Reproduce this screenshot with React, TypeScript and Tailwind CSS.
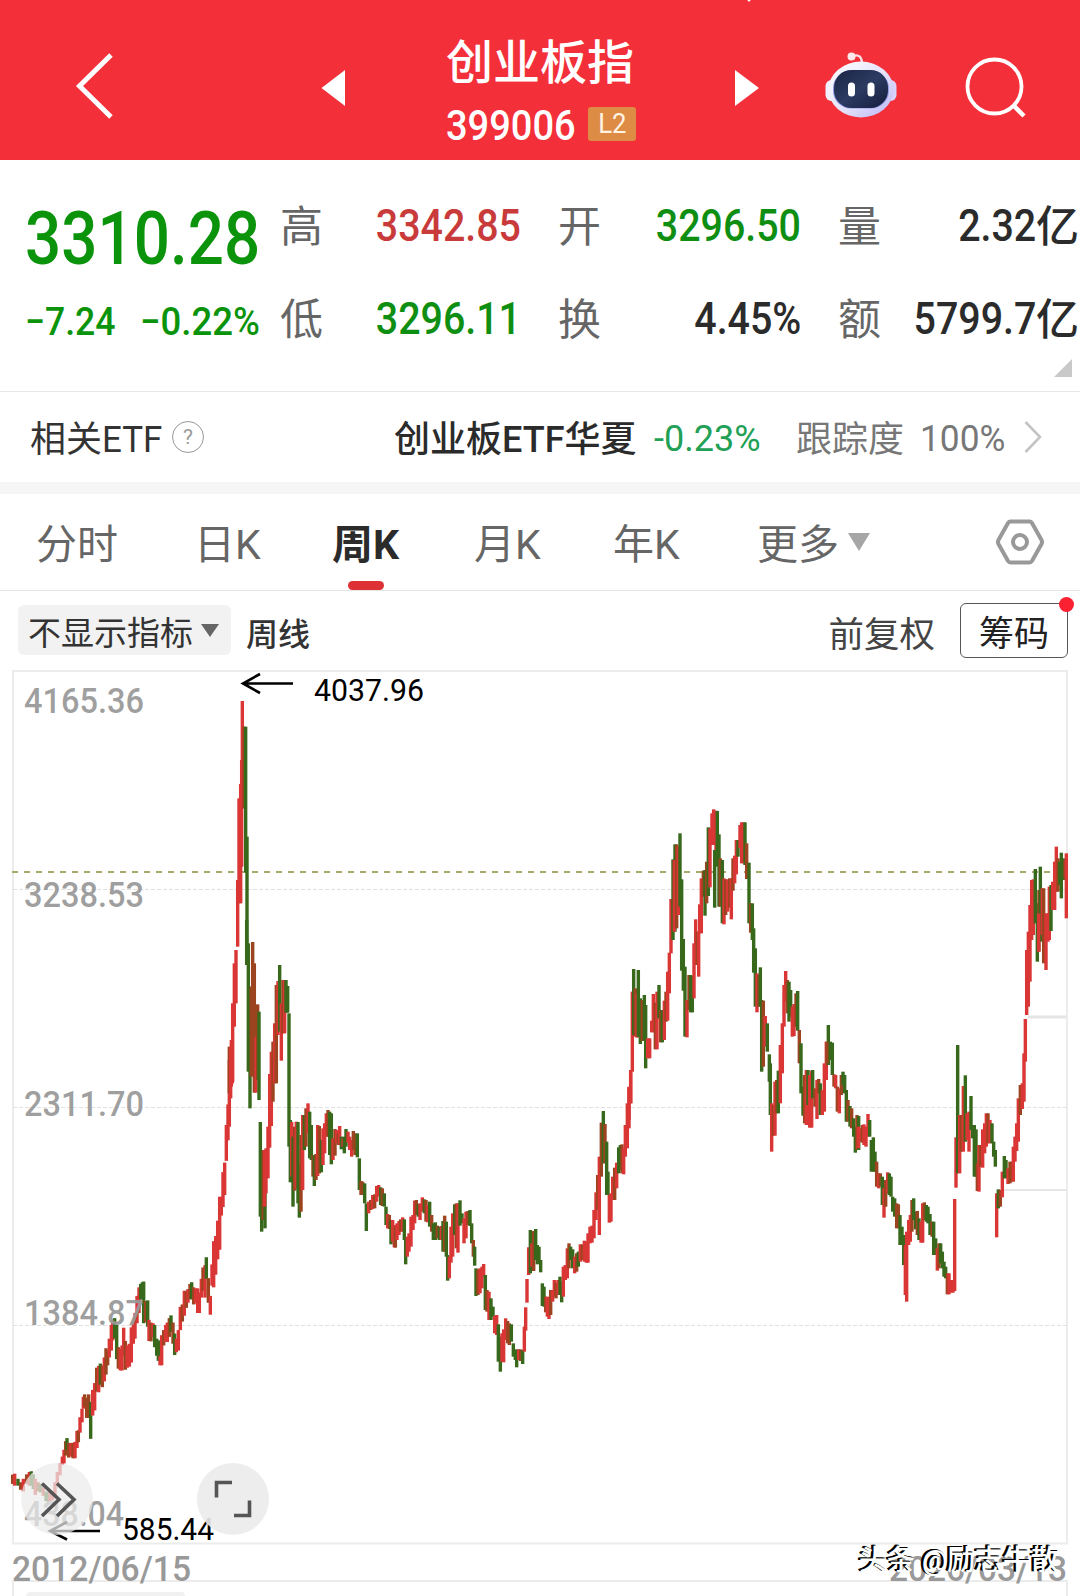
import { clsx } from 'clsx'

const CJK = "font-[Roboto,'Noto_Sans_CJK_SC',sans-serif]"

// Candles are "x high low colour", in thirds of a pixel from the run's origin.
// r = up week, g = down week, m = both overlapping
const RUNS = [
  {
    x: 0, y: 1060, sy: 1 / 2.925,
    bars: `38 1213 1240 m,44 1210 1245 r,54 1225 1245 g,62 1235 1257 m,70 1225 1262 r,80 1212 1240 m,88 1205 1245 r,94 1203 1245 g,100 1212 1255 g,106 1225 1272 r,114 1235 1262 m,122 1240 1265 g,130 1250 1275 r,138 1262 1290 g,145 1265 1292 g,150 1262 1290 r,158 1260 1288 r,165 1235 1275 r,172 1205 1245 r,180 1180 1215 r,187 1160 1185 r,192 1140 1180 r,197 1115 1157 m,201 1106 1140 g,206 1120 1163 m,213 1120 1160 r,219 1120 1165 m,225 1117 1165 r,231 1085 1135 r,235 1083 1118 m,240 1045 1090 r,246 1020 1060 r,250 985 1020 r,254 978 1015 m,260 988 1047 m,266 978 1047 m,272 1000 1108 g,278 965 1040 r,284 945 1025 r,290 900 970 m,296 895 972 r,301 888 950 g,307 893 957 m,313 870 940 r,318 843 920 m,323 850 893 m,328 815 870 r,334 775 850 r,338 760 820 r,344 755 815 g,350 775 875 g,355 840 903 m,361 845 908 r,366 835 908 r,371 783 865 r,376 822 906 m,382 835 900 r,388 830 897 r,394 782 885 r,400 765 830 r,405 740 815 r,411 690 770 r,417 665 740 r,422 655 700 g,427 650 700 g,431 648 770 g,437 705 767 m,443 703 780 g,447 760 822 r,453 768 823 m,459 770 810 r,464 775 840 g,470 815 865 g,475 820 880 g,480 865 893 r,485 805 893 r,491 790 835 m,497 775 825 r,502 768 825 r,508 755 810 m,513 747 795 g,519 768 830 m,524 800 863 g,529 815 855 r,535 790 850 r,541 722 790 r,547 715 765 m,553 675 748 r,559 675 725 m,564 670 710 r,570 655 700 m,575 650 700 g,581 665 715 m,587 668 712 r,593 668 740 r,598 680 740 r,604 640 695 r,609 607 675 m,615 600 695 r,619 577 640 g,625 638 710 m,631 690 745 r,636 598 660 r,641 530 665 r,647 515 628 r,653 470 583 r,659 400 555 r,664 400 455 r,669 328 430 r,674 300 395 r,679 190 295 r,684 130 235 r,688 0 195 r`,
  },
  {
    x: 0, y: 660, sy: 1 / 3,
    bars: `688 1160 1300 m,694 1140 1280 r,698 1030 1265 r,703 910 1100 r,708 870 1030 r,713 660 860 r,717 415 730 r,722 372 730 r,725 300 620 r,727 123 445 r,732 200 445 m,737 200 637 g,741 530 915 g`,
  },
  {
    x: 220, y: 920, sy: 1 / 3,
    bars: `32 380 535 r,37 360 490 r,80 0 135 g,85 70 455 g,90 200 565 g,94 200 470 m,98 66 440 m,103 130 518 m,108 350 518 r,113 253 480 m,117 275 540 g,121 606 890 g,125 710 935 g,130 690 900 m,135 690 925 g,134 690 860 r,138 685 820 r,144 620 775 r,149 462 683 r,154 395 618 r,159 365 545 m,164 310 490 r,169 195 490 m,174 183 345 r,179 135 335 g,184 250 422 r,189 180 340 m,194 180 340 r,198 180 278 g,203 198 278 g,207 280 680 g,211 600 787 g,215 606 770 r,219 650 860 g,224 620 812 m,229 605 805 r,234 606 850 g,238 735 893 g,243 645 875 m,248 585 810 r,253 585 690 g,258 565 680 m,264 550 640 r,269 575 715 g,274 615 720 g,279 705 770 m,283 705 798 g,288 702 780 m,293 615 768 r,298 618 760 m,304 660 757 g,309 625 735 r,314 610 700 r,319 580 650 r,324 570 650 m,329 575 705 g,334 580 733 g,339 655 720 r,345 627 707 m,350 630 670 r,355 640 675 m,359 618 675 r,364 650 688 g,369 655 680 r,373 650 700 g,378 627 680 g,384 635 668 r,389 650 690 r,395 660 710 r,400 633 690 m,405 640 705 m,412 640 712 g,418 715 810 g,423 783 825 m,428 785 825 m,434 790 850 g,439 850 933 g`,
  },
  {
    x: 340, y: 1060, sy: 1 / 3,
    bars: `86 425 460 r,92 420 450 m,98 405 447 r,104 403 445 m,110 378 425 r,116 375 410 r,122 382 435 g,127 385 438 m,133 400 440 g,138 440 495 g,143 462 505 r,148 465 507 m,153 482 553 g,158 480 545 r,163 495 562 r,166 500 563 m,171 490 540 r,177 483 525 r,182 478 515 m,188 472 515 r,193 478 540 g,197 540 613 g,202 530 590 r,207 520 575 r,213 470 560 r,219 465 510 r,224 422 490 r,229 420 465 m,235 432 470 g,240 430 480 r,247 412 455 r,253 418 460 g,258 420 485 m,263 435 487 r,269 425 500 g,275 465 515 m,280 490 540 g,286 487 540 g,292 497 535 m,298 500 540 g,304 498 540 r,309 483 575 g,314 467 575 m,319 485 590 g,323 585 662 g,328 590 655 r,333 500 608 r,338 460 590 r,344 433 525 g,349 430 565 m,354 430 578 r,360 421 497 g,366 460 490 g,372 475 550 r,378 455 535 r,384 453 495 m,390 450 498 g,395 490 550 g,400 540 590 m,404 560 617 g,408 625 708 g,414 628 705 m,420 625 700 r,426 620 685 r,431 612 650 r,436 645 750 g,441 690 755 m,447 695 780 r,453 715 780 g,459 740 770 g,464 768 820 r,470 765 825 r,475 793 905 g,481 830 935 g,486 820 905 r,491 808 907 r,497 775 840 r,503 783 850 m,508 790 855 m,514 793 845 g,520 850 890 g,526 870 900 g,530 868 922 g,536 868 900 r,542 868 903 m,548 870 912 g,553 800 875 r,557 742 812 r,561 657 728 r,566 562 645 r,571 510 640 g,576 550 620 r,581 513 633 m,587 507 600 g,592 555 613 g,597 560 600 g,602 600 637 g,607 670 738 g,612 680 740 g,617 710 757 m,622 710 770 r,627 715 777 r,632 690 765 m,638 690 725 r,643 660 710 r,648 668 715 m,654 660 705 r,660 650 705 g,665 665 727 g,670 620 710 r,676 615 660 r,682 565 655 r,687 550 625 m,692 560 600 g,698 568 625 g,704 590 640 r,710 580 635 m,715 575 620 g,721 553 605 r,727 553 600 m,733 542 605 r,739 545 608 r,744 520 608 r,750 500 550 r,756 497 548 r,762 450 535 r,768 397 480 r,773 345 450 m,778 290 525 r,784 188 350 m,790 153 310 g,795 192 310 m,800 245 405 g,804 335 405 g,808 405 488 r,813 400 485 r,818 350 420 r,824 323 420 m,830 308 385 r,836 262 340 g,841 255 330 g,846 253 340 m,851 265 343 r,856 195 290 r,862 130 265 r,867 85 205 r,872 30 130 r`,
  },
  {
    x: 580, y: 780, sy: 1 / 3,
    bars: `147 920 1020 r,152 870 970 r,157 635 875 r,161 567 765 g,166 625 770 m,171 640 773 r,175 570 770 g,181 655 792 g,187 660 783 m,193 645 783 g,197 675 865 g,203 775 835 r,209 775 835 r,215 722 757 r,220 642 757 r,226 668 808 m,231 635 808 r,237 615 715 g,242 690 787 m,247 690 787 g,253 662 780 r,258 635 725 m,263 575 722 r,268 518 640 r,273 357 520 r,279 238 480 g,285 193 455 g,283 240 455 r,290 193 445 m,295 200 405 r,300 160 380 g,305 298 572 g,310 477 632 g,315 560 770 g,321 660 772 r,327 585 690 m,332 585 697 g,337 588 697 g,342 490 655 r,347 418 555 r,352 455 555 m,356 455 590 r,359 373 460 r,364 295 460 r,370 272 350 m,375 270 407 g,380 245 370 m,385 142 348 g,390 145 322 r,396 100 195 r,401 88 195 r,404 210 383 g,408 92 210 r,412 93 260 g,417 163 380 g,421 235 380 m,427 240 430 g,432 295 433 r,437 298 405 m,443 298 395 r,449 295 383 m,454 295 418 r,459 235 332 m,464 227 310 r,469 180 283 r,474 180 230 g,480 135 205 r,485 127 250 r,490 127 250 r,495 127 255 g,500 190 297 m,507 248 430 g,512 370 458 m,517 370 480 g,521 445 578 g,526 505 680 g,531 580 697 r,536 585 680 m,541 562 680 g,545 660 875 g,550 662 860 m,556 708 800 r,562 730 815 g,568 823 905 g,571 850 1005 g,575 970 1115 r,580 975 1067 m,585 905 1067 r,590 900 1000 m,595 872 1000 g,601 795 970 r,607 730 880 r,612 615 740 r,617 573 665 r,622 600 700 m,627 605 725 g,632 630 710 g,637 680 770 r,642 672 768 r,648 640 740 m,653 633 752 g,658 750 850 m,663 790 940 g,669 920 1007 g,674 885 1030 m,679 870 1035 r,684 870 975 g,689 885 1043 r,695 872 1043 r,698 870 955 g,705 925 980 m,711 900 1017 r,716 897 940 m,721 910 1005 g,727 930 1005 r,733 850 995 r,739 785 900 r,745 735 855 g,741 785 850 m`,
  },
  {
    x: 760, y: 960, sy: 1 / 3,
    bars: `211 245 300 g,217 248 345 g,222 343 380 m,227 345 385 r,232 380 455 m,238 385 460 r,244 345 405 m,249 335 375 g,254 345 400 g,259 390 485 g,264 420 485 m,270 438 500 g,275 445 505 m,281 475 530 g,286 500 578 g,291 465 570 m,296 468 570 g,295 500 565 r,301 505 545 r,307 495 548 m,312 493 555 r,318 500 560 r,324 462 530 r,329 480 530 g,334 540 635 g,340 532 635 g,345 575 635 g,350 605 680 m,356 640 685 r,361 640 680 m,367 650 735 g,372 685 773 r,377 660 740 m,383 637 700 r,388 640 705 g,393 650 710 g,398 710 755 g,404 715 770 g,410 730 805 m,415 733 805 m,420 765 855 g,426 800 855 g,431 825 915 g,436 855 1005 r,440 815 1025 r,446 780 855 r,451 765 845 r,456 720 815 m,461 715 780 g,467 755 808 g,472 753 825 m,477 775 840 g,483 785 848 r,488 730 848 r,493 727 780 m,499 735 785 g,504 740 790 g,510 762 825 g,516 785 830 m,521 785 885 g,527 835 885 g,532 865 932 r,537 850 925 m,542 850 910 g,547 875 925 g,552 905 950 g,557 920 955 g,562 940 1003 m,567 940 1003 r,573 960 998 r,579 960 998 r,584 717 993 r,588 532 683 r,593 255 640 g,599 465 640 r,604 465 575 m,610 378 575 r,616 346 545 g,621 460 540 r,627 455 575 r,633 408 510 g,638 495 535 g,643 495 650 g,648 508 650 g,652 610 693 m,657 555 695 r,662 555 620 m,668 508 623 r,674 490 580 r,679 460 560 r,684 460 550 m,690 480 550 r,696 490 550 g,701 545 590 g,706 570 620 g,710 700 832 r,715 688 745 g,721 690 740 m,727 635 712 r,733 588 655 g,738 600 655 g,744 625 672 r,750 605 670 m,755 605 665 m,760 560 665 r,765 530 605 r,770 490 573 r,775 415 545 r,781 375 465 m,787 370 447 r,792 280 425 r,796 177 305 r`,
  },
  {
    x: 960, y: 830, sy: 1 / 3,
    bars: `200 360 555 r,205 305 530 r,210 225 455 r,215 150 330 r,220 148 315 r,226 117 280 g,232 220 395 g,237 180 365 m,241 110 335 g,236 250 365 r,247 175 315 r,251 175 400 m,258 250 420 r,264 250 335 r,268 170 330 r,273 165 303 g,278 155 240 r,284 95 240 r,289 50 185 r,294 85 185 m,299 95 165 g,304 68 205 g,310 85 150 g,315 90 145 m,319 70 265 r`,
  },
]

const FILL: Record<string, string> = { r: '#d93635', g: '#37681b', m: '#9c4420' }

function Candles() {
  return (
    <g>
      {RUNS.map((run) =>
        run.bars.split(',').map((bar, i) => {
          const [x, high, low, kind] = bar.split(' ')
          return (
            <rect
              key={`${run.x}-${run.y}-${i}`}
              x={run.x + Number(x) / 3 - 1.7}
              y={run.y + Number(high) * run.sy}
              width="3.4"
              height={(Number(low) - Number(high)) * run.sy}
              fill={FILL[kind]}
            />
          )
        }),
      )}
    </g>
  )
}

const AXIS = [
  { label: '4165.36', y: 713 },
  { label: '3238.53', y: 907 },
  { label: '2311.70', y: 1116 },
  { label: '1384.87', y: 1324.5 },
  { label: '438.04', y: 1525.5 },
]

function Chart() {
  return (
    <svg viewBox="0 660 1080 936" className="block h-[936px] w-full shrink-0">
      {/* frame and grid */}
      <g stroke="#ececec" strokeWidth="2" fill="none">
        <path d="M13 1543.5V671H1067V1543.5ZM13 1596V1581H1067V1596" />
        <path d="M1028 1017H1067" stroke="#e6e6e6" strokeWidth="3" />
        <path d="M1004 1190H1067" stroke="#e6e6e6" />
      </g>
      <path
        d="M13 889.5H1067M13 1107.5H1067M13 1325.5H1067"
        stroke="#e0e0e0"
        strokeWidth="1.2"
        strokeDasharray="4 2"
      />
      <path d="M12 872H1067" stroke="#a9a96c" strokeWidth="1.8" strokeDasharray="6 6" />
      <rect x="26" y="1592" width="159" height="10" rx="4" fill="#f1f1f1" />

      <Candles />

      <g fontFamily="Roboto, sans-serif" fontSize="35" fontWeight="500" fill="#999">
        {AXIS.map((a) => (
          <text
            key={a.label}
            x={24}
            y={a.y}
            textLength={a.label.length > 6 ? 120 : 100}
            lengthAdjust="spacingAndGlyphs"
            fillOpacity="0.94"
          >
            {a.label}
          </text>
        ))}
        <text x="12" y="1581" textLength="179" lengthAdjust="spacingAndGlyphs">2012/06/15</text>
        <text x="889" y="1581" textLength="178" lengthAdjust="spacingAndGlyphs">2026/03/13</text>
      </g>

      {/* high / low markers */}
      <g stroke="#000" strokeWidth="2.6" fill="none">
        <path d="M293 683.5H243M260 674L243 683.5L260 693" />
        <path d="M100 1531H50M67 1522L50 1531L67 1539.5" />
      </g>
      <g fontFamily="Roboto, sans-serif" fontSize="30.5" fill="#000">
        <text x="314" y="701" textLength="110" lengthAdjust="spacingAndGlyphs">4037.96</text>
        <text x="122" y="1540" textLength="92" lengthAdjust="spacingAndGlyphs">585.44</text>
      </g>

      {/* floating buttons */}
      <circle cx="57" cy="1499" r="36" fill="#ebebeb" fillOpacity="0.72" />
      <circle cx="233" cy="1499" r="36" fill="#ebebeb" fillOpacity="0.9" />
      <g stroke="#555" strokeWidth="3.6" fill="none">
        <path d="M42 1483.5L59 1499.5L42 1516M57 1483.5L74 1499.5L57 1516" />
        <path d="M216.500 1497.500V1482.500H232M234 1515.500H249.500V1500.500" />
      </g>
    </svg>
  )
}

function Robot() {
  return (
    <svg viewBox="0 0 72 68" className="h-[68px] w-[72px]">
      <defs>
        <linearGradient id="shell" x1="0" y1="0" x2="1" y2="1">
          <stop offset="0" stopColor="#fff" />
          <stop offset="0.55" stopColor="#e4e2fb" />
          <stop offset="1" stopColor="#b9b4f4" />
        </linearGradient>
        <linearGradient id="visor" x1="0" y1="0" x2="1" y2="1">
          <stop offset="0" stopColor="#1b2444" />
          <stop offset="0.5" stopColor="#2c3b62" />
          <stop offset="1" stopColor="#141c3c" />
        </linearGradient>
      </defs>
      <path d="M28 5C34 3 37 6 37 13" stroke="#fbdfe4" strokeWidth="2.400" fill="none" />
      <circle cx="26.500" cy="5.500" r="4" fill="#fde9ec" />
      <rect x="0.500" y="29" width="12" height="21" rx="6" fill="#f3f0fd" />
      <rect x="59.500" y="29" width="12" height="21" rx="6" fill="#d9d3fa" />
      <ellipse cx="36" cy="38.500" rx="32.500" ry="28" fill="url(#shell)" />
      <rect x="8" y="19.500" width="56" height="38" rx="18" fill="#8f9be6" />
      <rect x="9" y="19" width="54" height="38" rx="17.500" fill="url(#visor)" />
      <rect x="23" y="31.500" width="7" height="14" rx="3.500" fill="#fff" />
      <rect x="42.500" y="31.500" width="7" height="14" rx="3.500" fill="#fff" />
    </svg>
  )
}

function Header() {
  return (
    <header className="relative flex h-40 shrink-0 items-start bg-[#f32f3a] text-white">
      <svg viewBox="0 0 1080 160" className="pointer-events-none absolute inset-0 h-full w-full">
        <path d="M111 55L79.500 86L111 117" stroke="#fff" strokeWidth="5" fill="none" />
        <path d="M321.500 88L345 70V106ZM759 88L735 70V106Z" fill="#fff" />
        <circle cx="994.500" cy="86.500" r="27" stroke="#fff" strokeWidth="3.800" fill="none" />
        <path d="M1013 105L1024 116" stroke="#fff" strokeWidth="4.500" />
        <circle cx="749" cy="0" r="1.500" fill="#fff" />
      </svg>
      <div className="ml-[446px] w-[190px] pt-[38px]">
        <h1 className="text-[47px] leading-[50px] font-medium whitespace-nowrap">创业板指</h1>
        <div className="mt-[19px] flex h-[34px] items-center">
          <span className="w-[142px] origin-left scale-x-[0.905] pt-[3px] text-[42px] leading-none font-medium">399006</span>
          <span className="flex h-[34px] w-12 items-center justify-center rounded-[3px] bg-[#dd8b45] text-[28px] leading-none text-[#fff3e2]">
            <span className="scale-x-[0.92]">L2</span>
          </span>
        </div>
      </div>
      <div className="ml-[189px] pt-[51px]">
        <Robot />
      </div>
    </header>
  )
}

type StatProps = { label: string; value: string; unit?: string; tone?: string }

function Stat({ label, value, unit, tone = 'text-[#2b2b2b]' }: StatProps) {
  return (
    <div className="flex items-center justify-between">
      <span className="pt-[7px] text-[43px] leading-none text-[#666]">{label}</span>
      <span className={clsx('flex items-center leading-none font-medium', tone)}>
        <span className="origin-right scale-x-[0.875] pt-[3px] text-[45px]">{value}</span>
        {unit && <span className="pt-[7px] text-[43px]">{unit}</span>}
      </span>
    </div>
  )
}

function Quote() {
  return (
    <section className="relative flex h-[232px] shrink-0 border-b border-[#e8e8e8]">
      <div className="w-[280px] pt-[36px] pl-[25px] font-medium text-[#0b940b]">
        <div className="flex h-[84px] items-center">
          <span className="origin-left scale-x-[0.85] text-[75px] leading-none">3310.28</span>
        </div>
        <div className="flex h-[84px] items-center text-[39.5px] leading-none whitespace-nowrap">
          <span className="w-[115px] origin-left scale-x-[0.9]">−7.24</span>
          <span className="origin-left scale-x-[0.925]">−0.22%</span>
        </div>
      </div>
      <div className="grid h-[203px] w-[800px] grid-cols-[241px_243px_241px] grid-rows-[93px_93px] gap-x-[37px] pt-[17px]">
        <Stat label="高" value="3342.85" tone="text-[#c93a3a]" />
        <Stat label="开" value="3296.50" tone="text-[#0f8f12]" />
        <Stat label="量" value="2.32" unit="亿" />
        <Stat label="低" value="3296.11" tone="text-[#0f8f12]" />
        <Stat label="换" value="4.45%" />
        <Stat label="额" value="5799.7" unit="亿" />
      </div>
      <svg viewBox="0 0 18 18" className="absolute top-[359px] left-[1054px] -mt-[160px] size-[18px]">
        <path d="M18 0V18H0Z" fill="#c9c9c9" />
      </svg>
    </section>
  )
}

function RelatedEtf() {
  return (
    <section className="flex h-[90px] shrink-0 items-center text-[36px] leading-none whitespace-nowrap">
      <span className="ml-[30px] w-[142px] pt-[5px] text-[#333]">
        相关<span className="inline-block origin-left scale-x-[0.97]">ETF</span>
      </span>
      <span className="flex size-8 items-center justify-center rounded-full border-[1.5px] border-[#999] text-[21px] text-[#999]">
        ?
      </span>
      <span className="ml-[190px] w-[260px] pt-[5px] font-medium text-[#2b2b2b]">创业板ETF华夏</span>
      <span className="w-[142px] pt-[4px] text-[#22a055]">-0.23%</span>
      <span className="w-[124px] pt-[6px] text-[#777]">跟踪度</span>
      <span className="w-[104px] origin-left scale-x-[0.98] pt-[4px] text-[#777]">100%</span>
      <svg viewBox="0 0 18 32" className="h-8 w-[18px]">
        <path d="M1.500 1L16 16L1.500 31" stroke="#c4c4c4" strokeWidth="2.600" fill="none" />
      </svg>
    </section>
  )
}

const TABS = [
  { label: '分时', w: 'w-[158px]' },
  { label: '日K', w: 'w-[138px]' },
  { label: '周K', w: 'w-[142px]', active: true },
  { label: '月K', w: 'w-[139px]' },
  { label: '年K', w: 'w-[144px]' },
  { label: '更多', w: 'w-[91px]' },
]

function Tabs() {
  return (
    <nav className="flex h-[97px] shrink-0 items-center border-b border-[#e4e4e4] pl-9 text-[41px] leading-none text-[#666]">
      {TABS.map((tab) => (
        <span
          key={tab.label}
          className={clsx('relative flex h-full items-center pt-[6px] whitespace-nowrap', tab.w, tab.active && 'font-bold text-[#2b2b2b]')}
        >
          {tab.label}
          {tab.active && <i className="absolute bottom-0 left-4 h-[9px] w-9 rounded-full bg-[#dd3135]" />}
        </span>
      ))}
      <svg viewBox="0 0 22 18" className="h-[18px] w-[22px]">
        <path d="M0 0H22L11 18Z" fill="#a6a6a6" />
      </svg>
      <svg viewBox="0 0 48 46" className="ml-[126px] h-[46px] w-12">
        <path
          d="M14.500 2.500H33.500Q35 2.500 36 4L45.500 21Q46.500 23 45.500 25L36 42Q35 43.500 33.500 43.500H14.500Q13 43.500 12 42L2.500 25Q1.500 23 2.500 21L12 4Q13 2.500 14.500 2.500Z"
          stroke="#999" strokeWidth="4" fill="none"
        />
        <circle cx="24" cy="23" r="7" stroke="#999" strokeWidth="4" fill="none" />
      </svg>
    </nav>
  )
}

function Toolbar() {
  return (
    <div className="flex h-[69px] shrink-0 items-start leading-none whitespace-nowrap text-[#333]">
      <div className="mt-[14px] ml-[18px] flex h-[50px] w-[213px] items-center rounded-md bg-[#f2f2f2] pl-[10px] text-[33px]">
        <span className="pt-[6px]">不显示指标</span>
        <svg viewBox="0 0 18 13" className="ml-[8px] h-[13px] w-[18px]">
          <path d="M0 0H18L9 13Z" fill="#666" />
        </svg>
      </div>
      <span className="mt-[28px] ml-[15px] text-[32px] font-medium">周线</span>
      <span className="mt-[27px] ml-auto text-[35.5px] text-[#444]">前复权</span>
      <div className="relative mt-3 mr-[12px] ml-[25px] flex h-[55px] w-[108px] items-center justify-center rounded-[6px] border border-[#555] pt-[7px] text-[35px] text-[#222]">
        筹码
        <i className="absolute -top-[7px] -right-[7px] size-[15px] rounded-full bg-[#fa2133]" />
      </div>
    </div>
  )
}

export default function App() {
  return (
    <main className={clsx('relative flex h-[1596px] w-[1080px] flex-col overflow-hidden bg-white', CJK)}>
      <Header />
      <Quote />
      <RelatedEtf />
      <div className="h-3 shrink-0 bg-[#f5f5f5]" />
      <Tabs />
      <Toolbar />
      <Chart />
      <p className="absolute top-[1545px] left-[859px] text-[28px] leading-[32px] font-medium whitespace-nowrap text-white [text-shadow:-1px_-1px_0_#000,-2.5px_-1.5px_0_#000]">
        头条 @励志牛散
      </p>
    </main>
  )
}
